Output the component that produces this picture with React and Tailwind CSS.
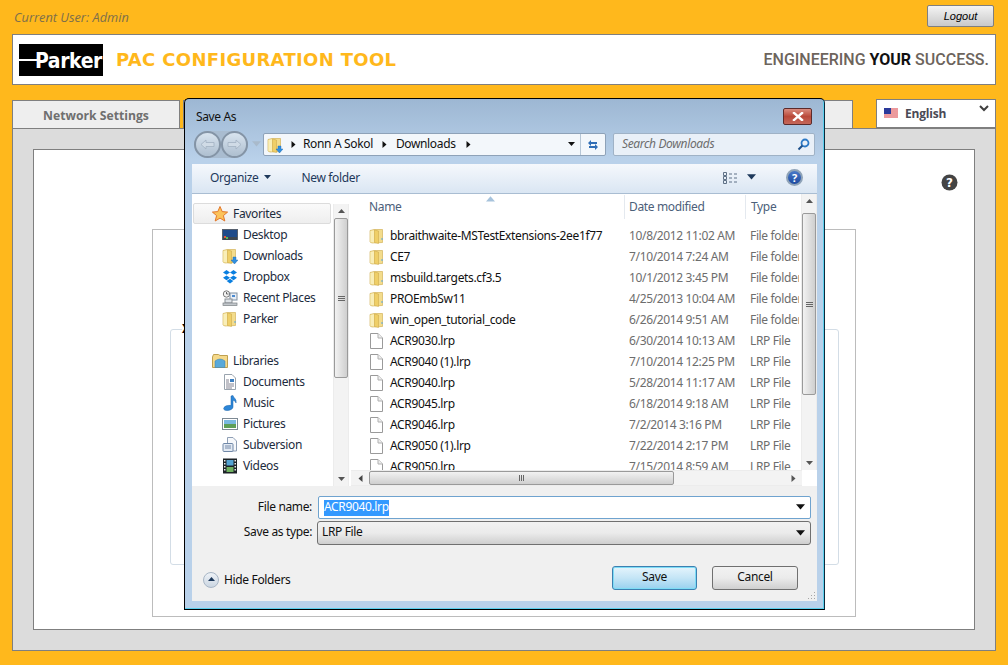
import React from "react";

const F = "font-['Noto_Sans',sans-serif] tracking-[-0.35px]";

function Folder({ arrow }) {
  return (
    <svg width="16" height="16" viewBox="0 0 16 16" className="shrink-0">
      <path d="M1 2.500 L5 1.500 L13.500 1.500 L13.500 14.500 L3 15 L1 14 Z" fill="#f3dc8c" stroke="#cdaa48" strokeWidth="0.6" />
      <path d="M1.400 3 L5 2.200 L5 14.500 L1.400 14 Z" fill="#f9eeb8" />
      <path d="M5.500 2 L9.500 3 L9.500 15.500 L5.500 14.500 Z" fill="#efcf68" stroke="#c9a445" strokeWidth="0.5" />
      <path d="M12.500 10 h1 v2 h-1 z" fill="#5aa7e0" />
      {arrow && <path d="M11 9 h3 v3 h2 l-3.500 4 l-3.500 -4 h2 z" fill="#2f8fe0" stroke="#1a66b0" strokeWidth="0.4" />}
    </svg>
  );
}

function FileI() {
  return (
    <svg width="14" height="16" viewBox="0 0 14 16" className="shrink-0">
      <path d="M1.500 .5 H9 L13.500 5 V15.500 H1.500 Z" fill="#fff" stroke="#9a9a9a" />
      <path d="M9 .5 V5 H13.500" fill="#eee" stroke="#b0b0b0" />
    </svg>
  );
}

function Star() {
  return (
    <svg width="16" height="16" viewBox="0 0 16 16">
      <path d="M8 .5 L10.200 5.600 L15.600 6.100 L11.400 9.600 L12.800 15 L8 12.100 L3.200 15 L4.600 9.600 L.4 6.100 L5.800 5.600 Z" fill="#fcc35a" stroke="#e2762a" strokeWidth="1" />
    </svg>
  );
}

const navIcons = {
  Desktop: (
    <svg width="16" height="16" viewBox="0 0 16 16">
      <rect x=".5" y="2.500" width="15" height="10" fill="#1e4a8a" stroke="#56606e" />
      <rect x="1" y="10" width="14" height="3" fill="#3d4650" />
      <rect x="2" y="9" width="2" height="2" fill="#e35b3a" />
      <rect x="4" y="10" width="2" height="2" fill="#58b858" />
    </svg>
  ),
  Downloads: <Folder arrow />,
  Dropbox: (
    <svg width="16" height="16" viewBox="0 0 16 16" fill="#0a7fe0">
      <path d="M4.500 1 L8 3.400 L4.500 5.800 L1 3.400 Z" />
      <path d="M11.500 1 L15 3.400 L11.500 5.800 L8 3.400 Z" />
      <path d="M4.500 6.400 L8 8.800 L4.500 11.200 L1 8.800 Z" />
      <path d="M11.500 6.400 L15 8.800 L11.500 11.200 L8 8.800 Z" />
      <path d="M4.700 12 L8 9.800 L11.300 12 L8 14.500 Z" />
    </svg>
  ),
  "Recent Places": (
    <svg width="16" height="16" viewBox="0 0 16 16">
      <circle cx="4.500" cy="4" r="3.200" fill="#f3f3f3" stroke="#777" />
      <path d="M4.500 2 V4 H6.500" stroke="#444" fill="none" strokeWidth=".8" />
      <rect x="8" y="3" width="7" height="7" fill="#e8eef5" stroke="#8090a0" />
      <rect x="10" y="5" width="3" height="2" fill="#4a8ad0" />
      <rect x="3" y="9" width="7" height="4" fill="#dfe4e8" stroke="#8a8f95" />
      <rect x="1" y="13" width="14" height="2.500" fill="#c3c8cc" stroke="#7a7f84" strokeWidth=".7" />
    </svg>
  ),
  Parker: <Folder />,
  Documents: (
    <svg width="16" height="16" viewBox="0 0 16 16">
      <path d="M2.500 .5 H10 L13.500 4 V15.500 H2.500 Z" fill="#fff" stroke="#9aa4ae" />
      <rect x="8" y="5" width="4" height="3" fill="#3d7fc0" />
      <path d="M4 6 H7 M4 8 H7 M4 10 H12 M4 12 H12 M4 14 H10" stroke="#667" strokeWidth=".8" />
    </svg>
  ),
  Music: (
    <svg width="16" height="16" viewBox="0 0 16 16">
      <path d="M9 1 L11 .5 C11.500 3 15 4 14 8 C13.500 6 12 5.500 11 5.500 L11 12 C11 14 8 15.500 5 15.500 C2 15.500 1 14 2 12.500 C3 11 6 10 9 10.500 Z" fill="#2c86d8" stroke="#1b62a8" strokeWidth=".5" />
    </svg>
  ),
  Pictures: (
    <svg width="16" height="16" viewBox="0 0 16 16">
      <rect x=".5" y="2.500" width="15" height="11" fill="#fff" stroke="#7e8a94" />
      <rect x="2" y="4" width="12" height="4" fill="#79b8e0" />
      <rect x="2" y="8" width="12" height="4" fill="#5e9e58" />
    </svg>
  ),
  Subversion: (
    <svg width="16" height="16" viewBox="0 0 16 16">
      <path d="M5.500 .5 H11 L14.500 4 V14 H5.500 Z" fill="#f6f8fb" stroke="#8f9fb5" />
      <rect x="1" y="6.500" width="10" height="8" rx="1" fill="#e3eaf3" stroke="#7088a8" />
      <path d="M3 9 H9 M3 11 H9" stroke="#5a7498" strokeWidth=".8" />
    </svg>
  ),
  Videos: (
    <svg width="16" height="16" viewBox="0 0 16 16">
      <rect x="1" y=".5" width="14" height="15" fill="#1d2327" />
      <rect x="4.500" y="2" width="7" height="5.500" fill="#55a4d4" />
      <rect x="4.500" y="9" width="7" height="5" fill="#6fb060" />
      <path d="M2 2 h1.500 v1.500 h-1.500 z M2 5 h1.500 v1.500 h-1.500 z M2 8 h1.500 v1.500 h-1.500 z M2 11 h1.500 v1.500 h-1.500 z M12.500 2 h1.500 v1.500 h-1.500 z M12.500 5 h1.500 v1.500 h-1.500 z M12.500 8 h1.500 v1.500 h-1.500 z M12.500 11 h1.500 v1.500 h-1.500 z" fill="#eee" />
    </svg>
  ),
};

function Tri({ dir = "down", c = "#111", size = 7 }) {
  const d = { down: "M0 1 H7 L3.500 5 Z", up: "M0 5 H7 L3.500 1 Z", right: "M1.500 0 V7 L5.500 3.500 Z", left: "M5.500 0 V7 L1.500 3.500 Z" }[dir];
  return (
    <svg width={size} height={size} viewBox="0 0 7 7" className="shrink-0">
      <path d={d} fill={c} />
    </svg>
  );
}

const rows = [
  ["bbraithwaite-MSTestExtensions-2ee1f77", "10/8/2012 11:02 AM", "File folder", 1],
  ["CE7", "7/10/2014 7:24 AM", "File folder", 1],
  ["msbuild.targets.cf3.5", "10/1/2012 3:45 PM", "File folder", 1],
  ["PROEmbSw11", "4/25/2013 10:04 AM", "File folder", 1],
  ["win_open_tutorial_code", "6/26/2014 9:51 AM", "File folder", 1],
  ["ACR9030.lrp", "6/30/2014 10:13 AM", "LRP File", 0],
  ["ACR9040 (1).lrp", "7/10/2014 12:25 PM", "LRP File", 0],
  ["ACR9040.lrp", "5/28/2014 11:17 AM", "LRP File", 0],
  ["ACR9045.lrp", "6/18/2014 9:18 AM", "LRP File", 0],
  ["ACR9046.lrp", "7/2/2014 3:16 PM", "LRP File", 0],
  ["ACR9050 (1).lrp", "7/22/2014 2:17 PM", "LRP File", 0],
  ["ACR9050.lrp", "7/15/2014 8:59 AM", "LRP File", 0],
];

function NavItem({ label }) {
  return (
    <div className="h-[21px] flex items-center pl-[30px] gap-[5px]">
      <span className="w-4 h-4 shrink-0">{navIcons[label]}</span>
      <span>{label}</span>
    </div>
  );
}

function VScroll({ thumbH, thumbTop }) {
  return (
    <div className="w-[16px] h-full bg-[#f3f3f3] border-x border-[#ececec] flex flex-col items-center">
      <div className="h-[14px] flex items-center justify-center shrink-0"><Tri dir="up" c="#555" /></div>
      <div className="flex-1 w-full relative">
        <div style={{ height: thumbH, marginTop: thumbTop }} className="w-full rounded-[2px] border border-[#9a9a9a] bg-gradient-to-r from-[#f2f2f2] to-[#cfcfcf] flex flex-col items-center justify-center gap-[1px]">
          <span className="w-[7px] h-px bg-[#666]" />
          <span className="w-[7px] h-px bg-[#666]" />
          <span className="w-[7px] h-px bg-[#666]" />
        </div>
      </div>
      <div className="h-[14px] flex items-center justify-center shrink-0"><Tri c="#555" /></div>
    </div>
  );
}

function RoundBtn({ flip }) {
  return (
    <div className="w-[27px] h-[27px] rounded-full border-2 border-[#8494a6] bg-gradient-to-b from-[#d9e4ef] to-[#aebfd0] flex items-center justify-center">
      <svg width="15" height="11" viewBox="0 0 15 11" style={{ transform: flip ? "scaleX(-1)" : "none" }}>
        <path d="M1 5.500 L6 1 V3.500 H14 V7.500 H6 V10 Z" fill="#d0dbe6" stroke="#a2b1c1" strokeWidth=".8" />
      </svg>
    </div>
  );
}

function SaveAsDialog() {
  return (
    <div className={`${F} absolute left-[184px] top-[98px] w-[641px] h-[512px] border border-black border-r-[#0b2a3c] rounded-t-[5px] bg-gradient-to-b from-[#9db7d3] to-[#b9d1ea] to-[12%] flex flex-col text-[12px] text-[#111] leading-none shadow-[inset_-1px_-1px_0_#5bd0ee]`}>
      <div className="h-[32px] flex items-start justify-between shrink-0">
        <span className="ml-[11px] mt-[12px] text-[#111]">Save As</span>
        <div className="mr-[12px] mt-[9px] w-[29px] h-[17px] rounded-[2px] border border-[#5c2a2a] bg-gradient-to-b from-[#d98c80] via-[#b9493a] to-[#c5675a] flex items-center justify-center">
          <svg width="12" height="9" viewBox="0 0 12 9"><path d="M2 1 L10 8 M10 1 L2 8" stroke="#fff" strokeWidth="2.400" strokeLinecap="square" /></svg>
        </div>
      </div>
      <div className="h-[27px] flex items-center shrink-0 pl-[9px]">
        <div className="flex rounded-full bg-[#a9bcd0]">
          <RoundBtn />
          <RoundBtn flip />
        </div>
        <div className="w-[14px] flex justify-center ml-[1px]"><Tri c="#a9bacb" size={9} /></div>
        <div className="w-[343px] h-[23px] rounded-[2px] border border-[#8ea2b8] bg-[#f3f7fb] flex items-center">
          <span className="ml-[3px] w-4 h-4"><Folder arrow /></span>
          <span className="ml-[7px]"><Tri dir="right" /></span>
          <span className="ml-[6px] pb-[2px]">Ronn A Sokol</span>
          <span className="ml-[8px]"><Tri dir="right" /></span>
          <span className="ml-[8px] pb-[2px]">Downloads</span>
          <span className="ml-[9px]"><Tri dir="right" /></span>
          <span className="ml-auto mr-[5px]"><Tri /></span>
          <div className="w-[25px] h-full border-l border-[#b6c6d6] flex items-center justify-center">
            <svg width="14" height="14" viewBox="0 0 14 14" fill="none"><path d="M2 5 L5 2 V4 H11 V6 H5 V8 Z" fill="#2f6db5" /><path d="M12 9 L9 12 V10 H3 V8 H9 V6 Z" fill="#2f6db5" /></svg>
          </div>
        </div>
        <div className="ml-[7px] w-[202px] h-[23px] rounded-[2px] border border-[#9fb2c6] bg-[#e9f0f8] flex items-center justify-between pl-[8px] pr-[4px]">
          <span className="italic text-[#6d6d6d] pb-[1px]">Search Downloads</span>
          <svg width="13" height="13" viewBox="0 0 13 13" fill="none"><circle cx="8" cy="5" r="3.500" stroke="#2c79c6" strokeWidth="1.800" /><path d="M5.500 7.500 L1.500 11.500" stroke="#1c4f8a" strokeWidth="2" /></svg>
        </div>
      </div>
      <div className="flex-1 mx-[7px] mt-[6px] mb-[8px] flex flex-col min-h-0">
        <div className="h-[30px] pb-[2px] bg-gradient-to-b from-[#f5f8fc] to-[#dae6f3] border-b border-[#a9bdd2] flex items-center text-[#1e395b] shrink-0">
          <span className="ml-[18px]">Organize</span>
          <span className="ml-[6px]"><Tri c="#1e395b" /></span>
          <span className="ml-[30px]">New folder</span>
          <svg width="16" height="12" viewBox="0 0 16 12" className="ml-auto" fill="none" stroke="#5f7186">
            <path d="M.5 .5 h3 v3 h-3 z M.5 4.500 h3 v3 h-3 z M.5 8.500 h3 v3 h-3 z M6 2 h3 M11 2 h3 M6 6 h3 M11 6 h3 M6 10 h3 M11 10 h3" />
          </svg>
          <span className="ml-[8px]"><Tri c="#1e395b" size={9} /></span>
          <span className="ml-[30px] mr-[14px] w-[17px] h-[17px] rounded-full border-2 border-[#8fa3b8] bg-gradient-to-b from-[#4a79c8] to-[#1d4aa0] text-white font-bold text-[11px] flex items-center justify-center">?</span>
        </div>
        <div className="h-[292px] flex bg-white shrink-0">
          <div className="w-[141px] pt-[9px] shrink-0 text-[#1c2b3d]">
            <div className="ml-[1px] w-[138px] h-[21px] rounded-[2px] border border-[#dcdcdc] bg-gradient-to-b from-[#fafafa] to-[#eeeeee] flex items-center pl-[18px] gap-[5px]">
              <Star />
              <span>Favorites</span>
            </div>
            {["Desktop", "Downloads", "Dropbox", "Recent Places", "Parker"].map((l) => (
              <NavItem key={l} label={l} />
            ))}
            <div className="h-[21px]" />
            <div className="h-[21px] flex items-center pl-[20px] gap-[5px]">
              <svg width="16" height="16" viewBox="0 0 16 16">
                <path d="M.5 4 V14.500 H15.500 V2.500 H8 L6.500 1.500 H1.500 Z" fill="#f5d98a" stroke="#bfa050" />
                <path d="M3 14.500 V8 Q8 4 13 8 V14.500 Z" fill="#5aa9d8" stroke="#3a7fb0" strokeWidth=".5" />
              </svg>
              <span>Libraries</span>
            </div>
            {["Documents", "Music", "Pictures", "Subversion", "Videos"].map((l) => (
              <NavItem key={l} label={l} />
            ))}
          </div>
          <div className="pt-[10px] h-full"><VScroll thumbH={160} thumbTop={0} /></div>
          <div className="w-[2px] shrink-0" />
          <div className="flex-1 min-w-0 flex flex-col">
            <div className="flex-1 min-h-0 flex">
              <div className="flex-1 min-w-0 flex flex-col">
                <div className="h-[26px] shrink-0 flex items-center relative text-[#4c607a]">
                  <span className="absolute left-[135px] top-[1px]"><Tri dir="up" c="#a7c3dc" size={9} /></span>
                  <span className="ml-[18px] w-[255px]">Name</span>
                  <span className="w-px h-[24px] bg-[#e4e9ef]" />
                  <span className="ml-[4px] w-[116px]">Date modified</span>
                  <span className="w-px h-[24px] bg-[#e4e9ef]" />
                  <span className="ml-[5px]">Type</span>
                </div>
                <div className="flex-1 min-h-0 overflow-hidden pt-[5px]">
                  {rows.map(([n, d, t, isF]) => (
                    <div key={n + d} className="h-[21px] flex items-center">
                      <span className="ml-[18px] w-[21px] flex shrink-0">{isF ? <Folder /> : <FileI />}</span>
                      <span className="w-[239px] whitespace-nowrap">{n}</span>
                      <span className="w-[121px] text-[#6d6d6d] whitespace-nowrap">{d}</span>
                      <span className="w-[49px] overflow-hidden text-[#6d6d6d] whitespace-nowrap">{t}</span>
                    </div>
                  ))}
                </div>
              </div>
              <VScroll thumbH={182} thumbTop={5} />
            </div>
            <div className="h-[16px] flex items-center bg-[#f3f3f3] border-y border-[#ececec] shrink-0 mr-[15px]">
              <span className="w-[18px] flex justify-center"><Tri dir="left" c="#444" /></span>
              <div className="w-[305px] h-full rounded-[2px] border border-[#9a9a9a] bg-gradient-to-b from-[#f2f2f2] to-[#cfcfcf] flex items-center justify-center gap-[1px]">
                <span className="w-px h-[6px] bg-[#666]" />
                <span className="w-px h-[6px] bg-[#666]" />
                <span className="w-px h-[6px] bg-[#666]" />
              </div>
              <span className="ml-auto mr-[5px]"><Tri dir="right" c="#555" /></span>
            </div>
          </div>
        </div>
        <div className="flex-1 bg-[#f0f0f0] relative flex flex-col text-[#111]">
          <div className="mt-[10px] flex items-center h-[23px]">
            <span className="w-[120px] text-right pb-[2px]">File name:</span>
            <div className="ml-[6px] w-[493px] h-[23px] border border-[#6fa3cf] bg-white flex items-center pl-[5px] pr-[5px] rounded-[2px]">
              <span className="bg-[#3399ff] text-white h-[16px] flex items-center pb-[1px]">ACR9040.lrp</span>
              <span className="ml-auto"><Tri size={9} /></span>
            </div>
          </div>
          <div className="mt-[2px] flex items-center h-[24px]">
            <span className="w-[120px] text-right pb-[2px]">Save as type:</span>
            <div className="ml-[5px] w-[494px] h-[24px] border border-[#707070] bg-gradient-to-b from-[#f2f2f2] via-[#ebebeb] to-[#cfcfcf] flex items-center pl-[4px] pr-[5px] rounded-[3px]">
              <span className="pb-[2px]">LRP File</span>
              <span className="ml-auto"><Tri size={9} /></span>
            </div>
          </div>
          <div className="mt-[20px] flex items-center h-[26px]">
            <div className="ml-[11px] w-[16px] h-[16px] mt-[3px] rounded-full border border-[#a8b6c6] bg-gradient-to-b from-[#eef2f7] to-[#cbd6e2] flex items-center justify-center"><Tri dir="up" c="#1e395b" /></div>
            <span className="ml-[5px] mt-[3px]">Hide Folders</span>
            <div className="ml-auto w-[85px] h-[24px] pb-[2px] rounded-[3px] border border-[#3c7fb1] bg-gradient-to-b from-[#e5f4fc] via-[#c4e5f6] to-[#98d1ef] shadow-[inset_0_0_0_1px_#7ddcf5] flex items-center justify-center">Save</div>
            <div className="ml-[15px] mr-[19px] w-[86px] h-[24px] pb-[2px] rounded-[3px] border border-[#707070] bg-gradient-to-b from-[#f2f2f2] via-[#ebebeb] to-[#cfcfcf] flex items-center justify-center">Cancel</div>
          </div>
          <svg width="9" height="9" viewBox="0 0 9 9" className="absolute right-[1px] bottom-[1px]" fill="#a5a5a5">
            <path d="M7 1 h1 v1 h-1 z M4 4 h1 v1 h-1 z M7 4 h1 v1 h-1 z M1 7 h1 v1 h-1 z M4 7 h1 v1 h-1 z M7 7 h1 v1 h-1 z" />
          </svg>
        </div>
      </div>
    </div>
  );
}

export default function App() {
  return (
    <div className="relative w-[1008px] h-[665px] overflow-hidden bg-[#ffb81c] font-['Open_Sans',sans-serif]">
      <div className="h-[34px] flex items-start justify-between px-[14px] shrink-0">
        <span className="mt-[9px] italic text-[12.800px] leading-4 text-[#7d6f4b]">Current User: Admin</span>
        <button className="mt-[5px] w-[67px] h-[22px] rounded-[2px] border border-[#7f7f7f] bg-gradient-to-b from-[#f4f4f4] to-[#c9c9c9] italic text-[11px] text-black font-['Liberation_Sans',sans-serif]">Logout</button>
      </div>
      <header className="mx-[12px] h-[51px] border border-[#7f7f7f] bg-white flex items-center pl-[6px] pr-[6px]">
        <div className="w-[84px] h-[32px] bg-black relative flex items-center justify-end pr-[1px] pt-[4px] overflow-hidden">
          <span className="absolute left-0 top-[15px] w-[20px] h-[2px] bg-white" />
          <span className="font-['DejaVu_Sans_Condensed','DejaVu_Sans',sans-serif] font-bold text-[21px] tracking-[-0.4px] text-white leading-none">Parker</span>
        </div>
        <h1 className="ml-[13px] mt-[1px] font-['DejaVu_Sans',sans-serif] font-bold text-[18px] tracking-[0.32px] leading-none text-[#ffb81c]">PAC CONFIGURATION TOOL</h1>
        <div className="ml-auto font-['Roboto',sans-serif] font-medium text-[16px] text-[#6d645c] leading-none">
          ENGINEERING <span className="text-[#111] font-bold">YOUR</span> SUCCESS.
        </div>
      </header>
      <div className="mx-[12px] mt-[14px] h-[30px] flex relative">
        <div className="w-[168px] h-[31px] mt-[1px] border border-b-0 border-[#7f7f7f] bg-[#eeeeee] flex items-center justify-center text-[12.200px] font-bold text-[#6f6f6f]">Network Settings</div>
        <div className="ml-[3px] w-[670px] h-[31px] mt-[1px] border border-b-0 border-[#7f7f7f] bg-[#eeeeee]" />
        <div className="ml-auto w-[120px] h-[29px] border border-[#7f7f7f] bg-white flex items-center relative">
          <svg width="14" height="11" viewBox="0 0 14 11" className="ml-[7px]">
            <rect width="14" height="11" fill="#fff" />
            <path d="M0 1 H14 M0 3 H14 M0 5 H14 M0 7 H14 M0 9 H14" stroke="#d8353a" strokeWidth="1" />
            <rect width="7" height="6" fill="#2b3a9a" />
          </svg>
          <span className="ml-[7px] text-[12px] font-bold text-[#4a4a55] tracking-[-0.2px]">English</span>
          <svg width="10" height="7" viewBox="0 0 10 7" className="absolute right-[6px] top-[5px]" fill="none"><path d="M1 1 L5 5 L9 1" stroke="#3f3f3f" strokeWidth="2" /></svg>
        </div>
      </div>
      <main className="mx-[12px] h-[523px] mt-[-1px] relative border border-[#7f7f7f] bg-[#dcdcdc] p-[20px]">
        <div className="h-[481px] border border-[#7f7f7f] bg-white pt-[79px] pl-[118px] relative">
          <svg width="17" height="17" viewBox="0 0 17 17" className="absolute right-[16px] top-[24px]">
            <circle cx="8.500" cy="8.500" r="8" fill="#444" />
            <text x="8.500" y="13" textAnchor="middle" fontSize="12" fontWeight="700" fill="#fff" fontFamily="DejaVu Sans">?</text>
          </svg>
          <div className="w-[704px] h-[388px] border border-[#bcbcbc] pt-[99px] pl-[17px]">
            <div className="w-[669px] h-[236px] border border-[#d3dde6] rounded-[3px] relative">
              <span className="absolute left-[11px] top-[-9px] bg-white text-[12px] font-bold text-black leading-4">XML</span>
            </div>
          </div>
        </div>
      </main>
      <SaveAsDialog />
    </div>
  );
}
